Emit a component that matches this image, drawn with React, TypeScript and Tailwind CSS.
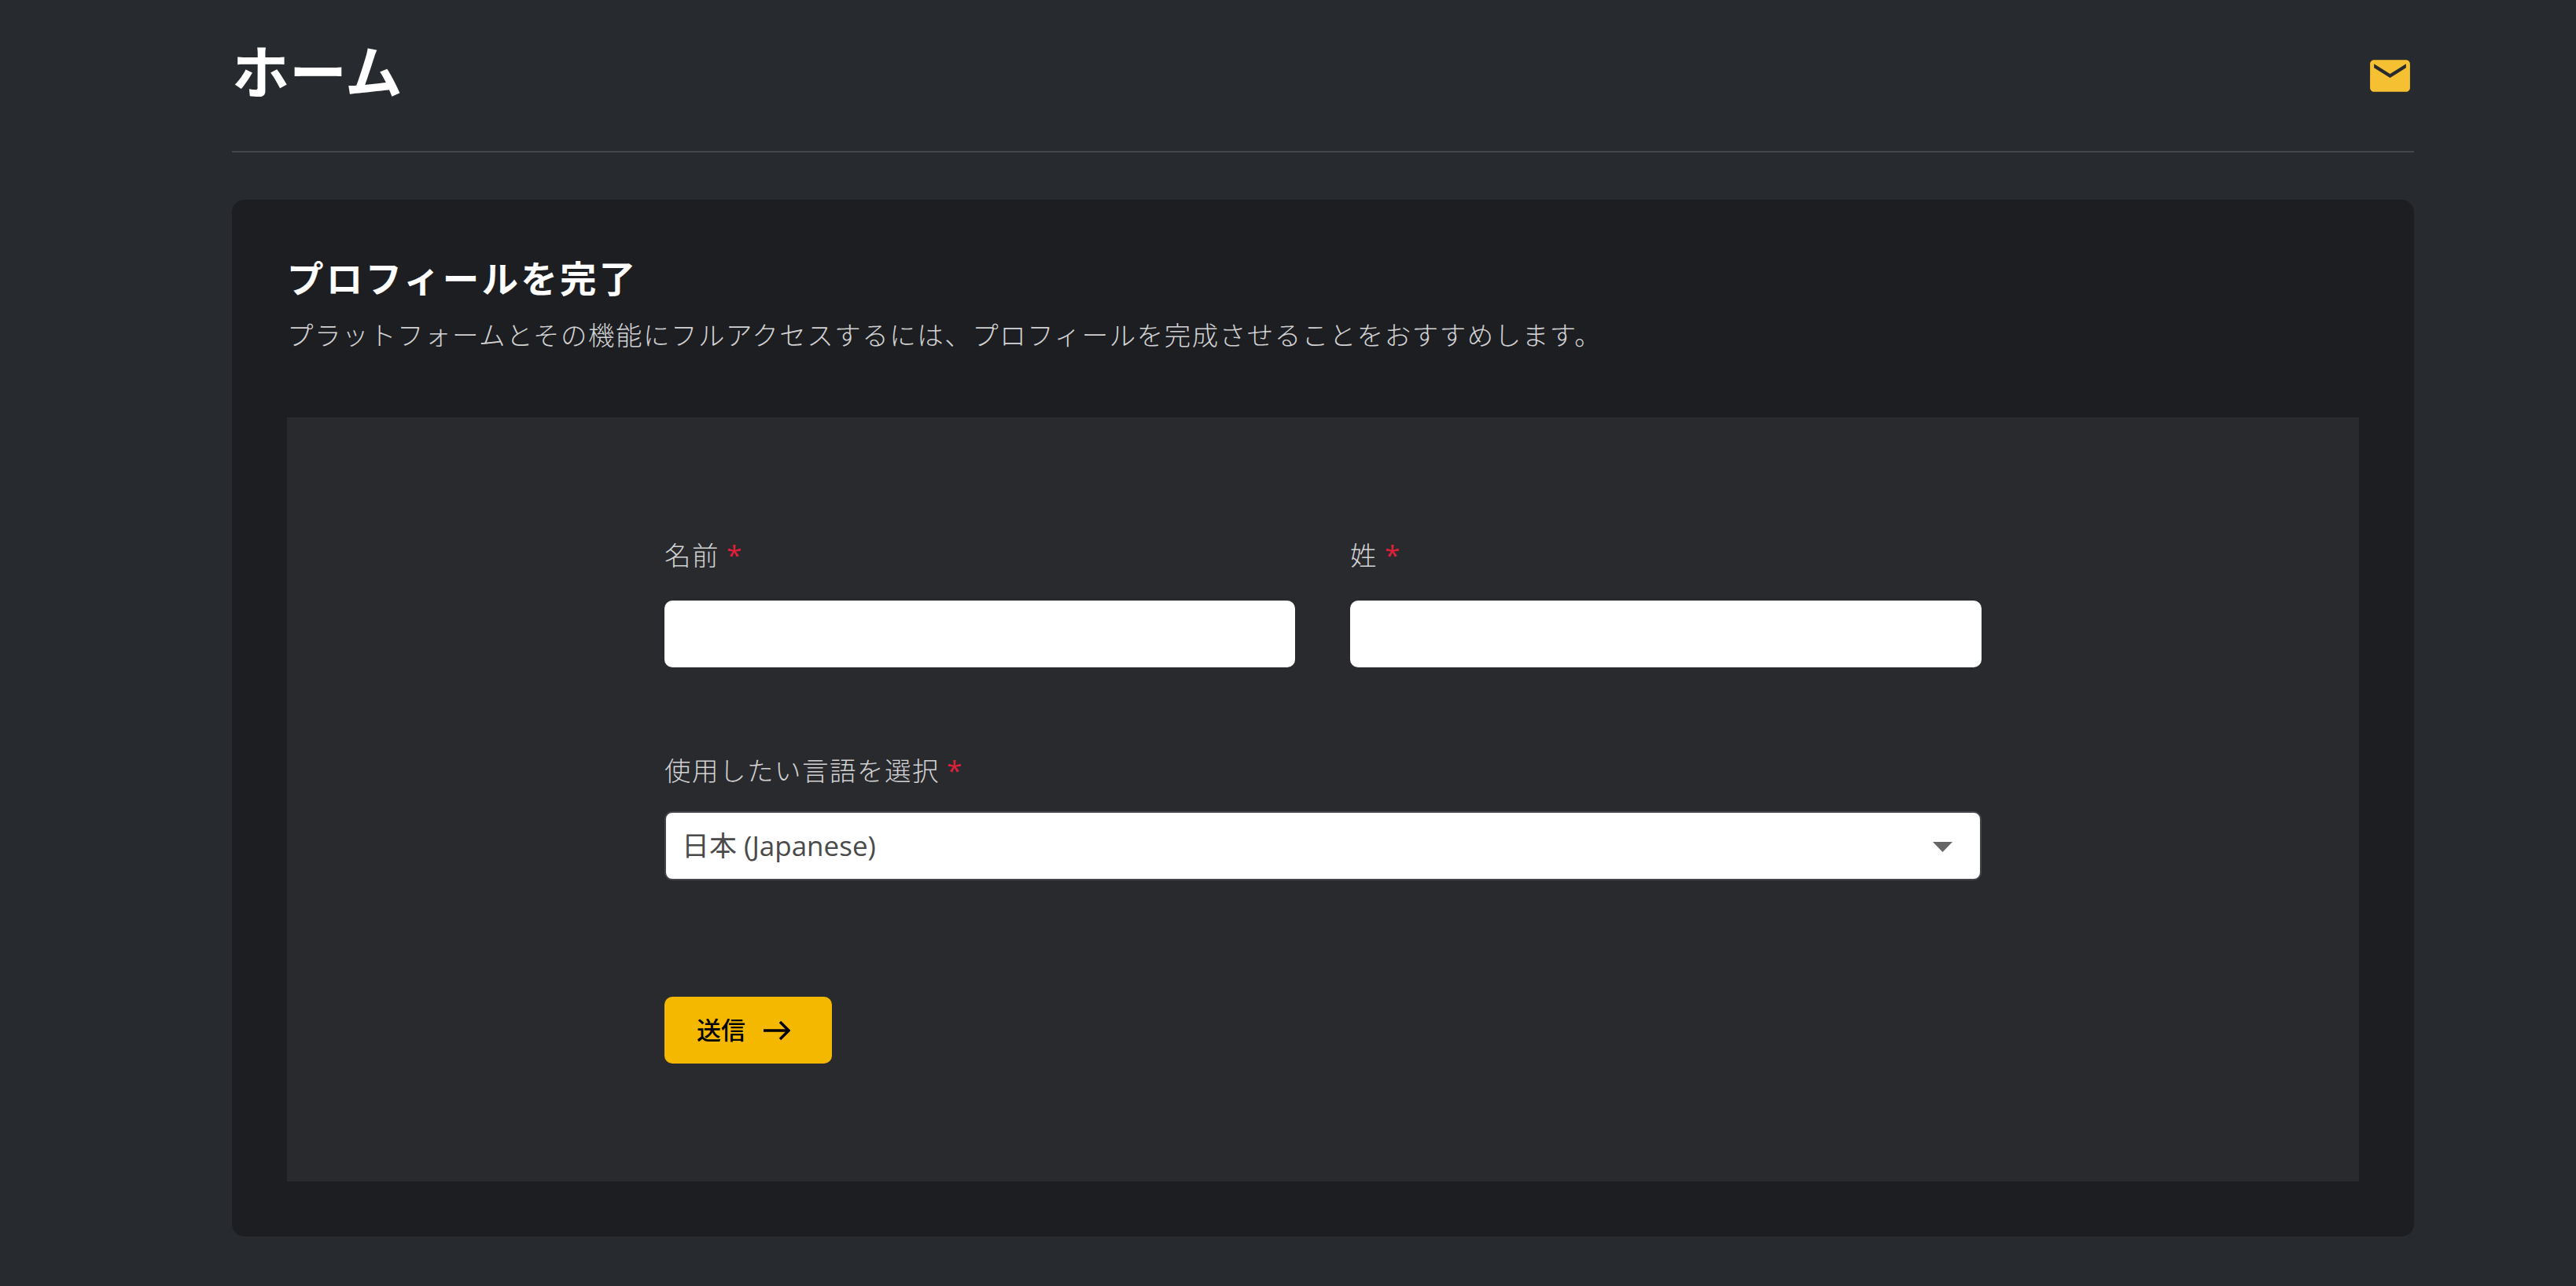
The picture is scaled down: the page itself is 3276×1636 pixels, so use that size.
import React from 'react';

const font = "font-['Open_Sans','Noto_Sans_CJK_JP',sans-serif]";

const Label: React.FC<{ text: string }> = ({ text }) => (
    <label className="block h-[50px] text-[33.500px] leading-[50px] tracking-[1.500px] text-[#d2d2d4] font-light">
        {text}<span className="ml-[9px] text-[35px] leading-none font-normal tracking-normal text-[#e0203a]">*</span>
    </label>
);

const App: React.FC = () => {
    return (
        <div className={`${font} min-h-[1636px] bg-[#272a2e] pl-[295px] pr-[206px] pb-[63px]`}>
            <header className="flex h-[194px] items-center justify-between border-b-2 border-[#44464b]">
                <h1 className="mb-[12px] text-[73px] leading-none font-bold text-white">ホーム</h1>
                <svg viewBox="0 0 24 24" className="h-[61px] w-[61px] fill-[#f5c132]">
                    <path d="M20 4H4c-1.1 0-1.99.9-1.99 2L2 18c0 1.1.9 2 2 2h16c1.1 0 2-.9 2-2V6c0-1.1-.9-2-2-2zm0 4l-8 5-8-5V6l8 5 8-5v2z" />
                </svg>
            </header>

            <main className="mt-[60px] rounded-[16px] bg-[#1d1e21] p-[70px]">
                <div className="h-[207px]">
                    <h2 className="text-[46.500px] leading-[60px] font-bold tracking-[3.200px] text-white">プロフィールを完了</h2>
                    <p className="mt-[17px] text-[33.500px] leading-[50px] font-light tracking-[1.500px] text-[#d2d2d4]">
                        プラットフォームとその機能にフルアクセスするには、プロフィールを完成させることをおすすめします。
                    </p>
                </div>

                <div className="bg-[#292a2e] px-[480px] pt-[150px] pb-[150px]">
                    <form className="w-[1675px]">
                        <div className="grid grid-cols-[802px_803px] gap-x-[70px]">
                            <div>
                                <Label text="名前" />
                                <input type="text" className="mt-[33px] block h-[85px] w-full rounded-[10px] bg-white" />
                            </div>
                            <div>
                                <Label text="姓" />
                                <input type="text" className="mt-[33px] block h-[85px] w-full rounded-[10px] bg-white" />
                            </div>
                        </div>

                        <div className="mt-[106px]">
                            <Label text="使用したい言語を選択" />
                            <div className="relative mt-[27px]">
                                <select className="block h-[88px] w-full appearance-none rounded-[10px] border-2 border-[#44464b] bg-white pl-[20px] text-[35px] text-[#4a4a4a] font-normal">
                                    <option>日本 (Japanese)</option>
                                </select>
                                <svg viewBox="0 0 25 13" className="absolute top-[39px] right-[37px] h-[13px] w-[25px] fill-[#666666]">
                                    <path d="M0 0h25L12.500 13z" />
                                </svg>
                            </div>
                        </div>

                        <button type="button" className="mt-[148px] flex h-[85px] w-[213px] items-center rounded-[10px] bg-[#f5b800] pl-[41px] text-[31px] font-medium text-black">
                            送信
                            <svg viewBox="0 0 34 26" className="ml-[23px] h-[26px] w-[34px] fill-none stroke-black stroke-[3.5]">
                                <path d="M0 13h32M21 2l11 11-11 11" />
                            </svg>
                        </button>
                    </form>
                </div>
            </main>
        </div>
    );
};

export default App;
